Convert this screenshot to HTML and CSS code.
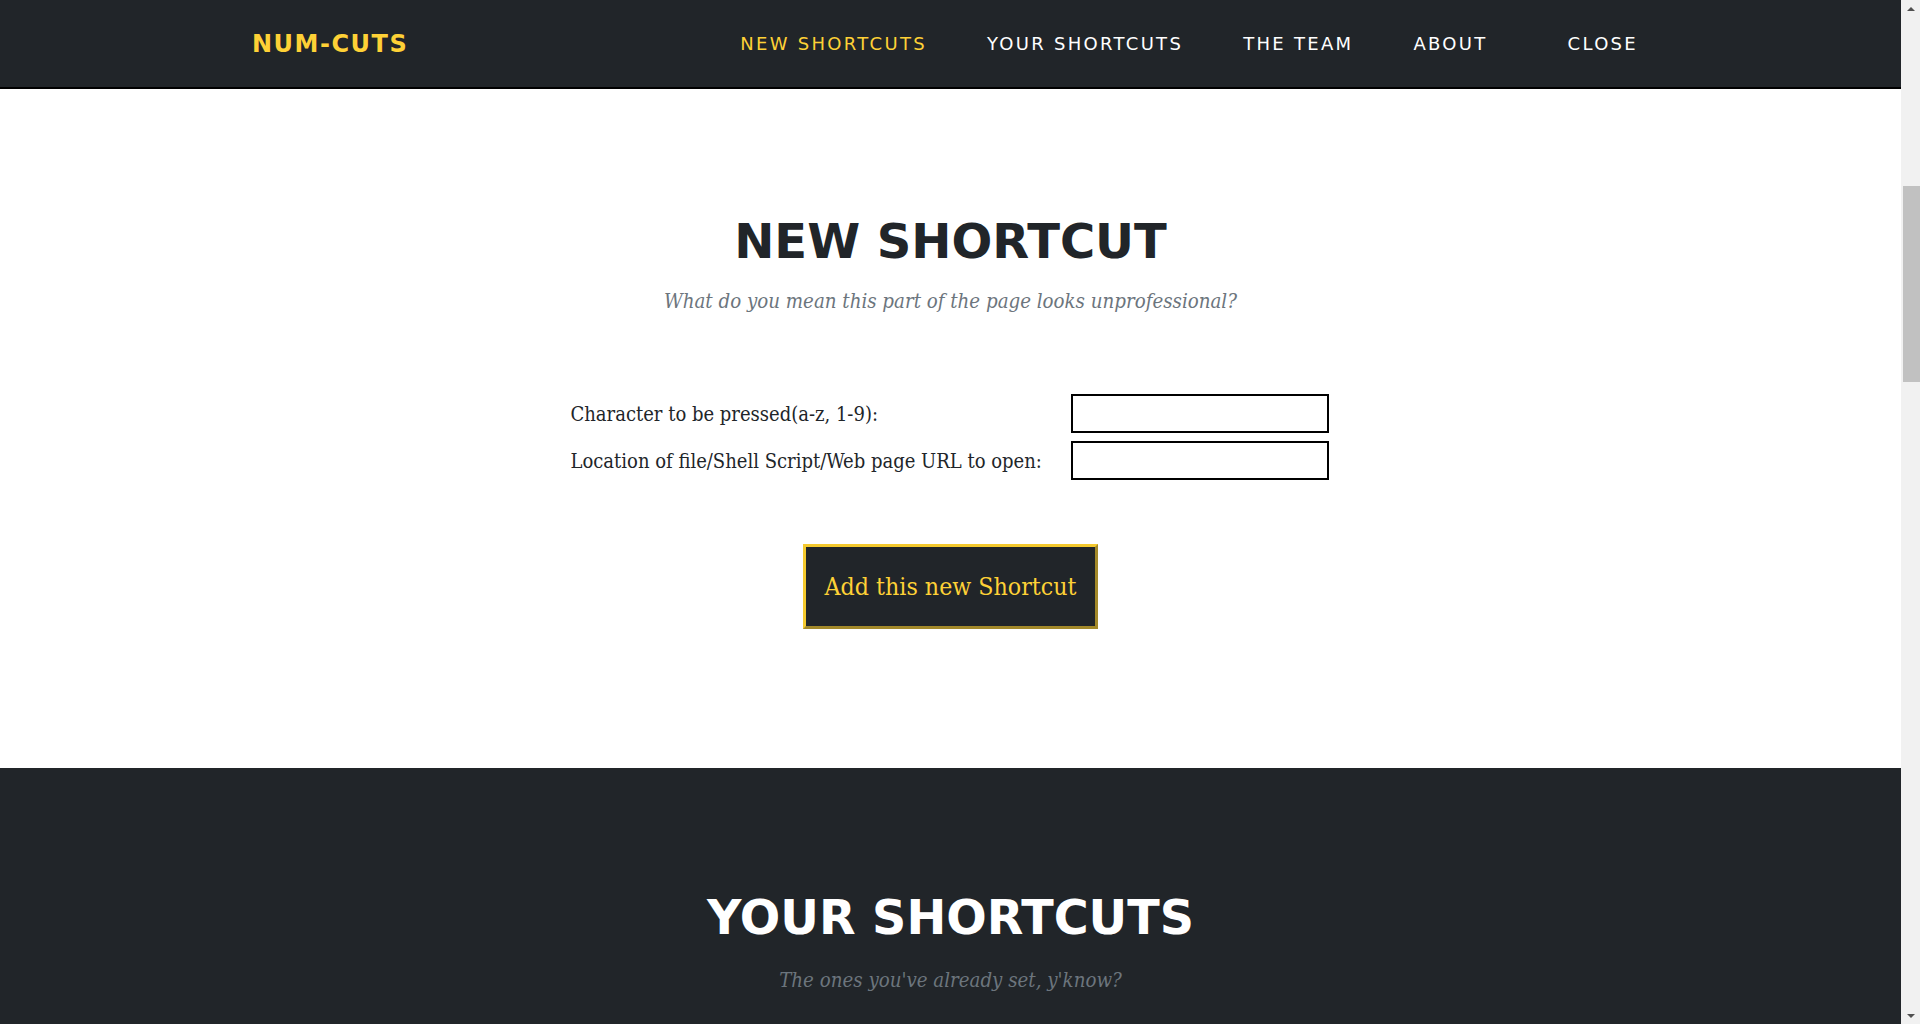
FILE: index.html
```html
<!DOCTYPE html>
<html lang="en">
<head>
<meta charset="utf-8">
<title>NUM-CUTS</title>
<link rel="stylesheet" href="styles.css">
</head>
<body>
<div class="viewport">
  <div class="page">
    <nav class="navbar">
      <a class="brand" href="#">NUM-CUTS</a>
      <ul class="nav-links">
        <li><a class="nav-link active" href="#">New Shortcuts</a></li>
        <li><a class="nav-link" href="#">Your Shortcuts</a></li>
        <li><a class="nav-link" href="#">The Team</a></li>
        <li><a class="nav-link" href="#">About</a></li>
        <li class="nav-close"><a class="nav-link" href="#">Close</a></li>
      </ul>
    </nav>

    <section class="section section-light">
      <h2 class="section-heading">New Shortcut</h2>
      <h3 class="section-subheading">What do you mean this part of the page looks unprofessional?</h3>
      <form class="shortcut-form">
        <div class="fields">
          <label class="field-label" for="key">Character to be pressed(a-z, 1-9):</label>
          <input class="field-input" id="key" type="text">
          <label class="field-label" for="target">Location of file/Shell Script/Web page URL to open:</label>
          <input class="field-input" id="target" type="text">
        </div>
        <button class="add-btn" type="button">Add this new Shortcut</button>
      </form>
    </section>

    <section class="section section-dark">
      <h2 class="section-heading">Your Shortcuts</h2>
      <h3 class="section-subheading">The ones you've already set, y'know?</h3>
    </section>
  </div>

  <div class="scrollbar">
    <div class="sb-btn sb-up"></div>
    <div class="sb-track"><div class="sb-thumb"></div></div>
    <div class="sb-btn sb-down"></div>
  </div>
</div>
</body>
</html>
```

FILE: styles.css
```css
html, body {
  margin: 0;
  height: 100%;
  overflow: hidden;
}

body {
  font-family: "DejaVu Serif", serif;
  color: #212529;
  background: #fff;
}

.viewport {
  display: flex;
  height: 1024px;
}

.page {
  flex: 1;
  min-width: 0;
  overflow: hidden;
  display: flex;
  flex-direction: column;
}

/* ---------- navbar ---------- */
.navbar {
  flex: none;
  height: 87px;
  background: #212529;
  border-bottom: 2px solid #000;
  display: flex;
  align-items: center;
  padding: 0 263px 0 252px;
}

.brand {
  font-family: "DejaVu Sans", sans-serif;
  font-weight: 700;
  font-size: 24px;
  letter-spacing: 1.5px;
  color: #fed136;
  text-decoration: none;
}

.nav-links {
  margin: 0 0 0 auto;
  padding: 0;
  list-style: none;
  display: flex;
  gap: 60px;
}

.nav-close {
  margin-left: 20px;
}

.nav-link {
  font-family: "DejaVu Sans", sans-serif;
  font-size: 18px;
  letter-spacing: 2.3px;
  text-transform: uppercase;
  color: #fff;
  text-decoration: none;
}

.nav-link.active {
  color: #fed136;
}

/* ---------- sections ---------- */
.section {
  text-align: center;
  box-sizing: border-box;
}

.section-light {
  flex: none;
  height: 679px;
  padding-top: 128px;
  background: #fff;
}

.section-dark {
  flex: 1;
  padding-top: 126px;
  background: #212529;
}

.section-heading {
  margin: 0;
  font-family: "DejaVu Sans", sans-serif;
  font-weight: 700;
  font-size: 48px;
  line-height: 1;
  text-transform: uppercase;
  color: #212529;
}

.section-dark .section-heading {
  color: #fff;
  font-size: 47.6px;
}

.section-subheading {
  margin: 22px 0 0;
  font-family: "DejaVu Serif", serif;
  font-stretch: condensed;
  font-style: italic;
  font-weight: 400;
  font-size: 20.3px;
  line-height: 1.45;
  color: #6c757d;
}

.section-dark .section-subheading {
  margin-top: 24px;
}

/* ---------- form ---------- */
.shortcut-form {
  margin-top: 78px;
  display: flex;
  flex-direction: column;
  align-items: center;
}

.fields {
  display: grid;
  grid-template-columns: 500px 258px;
  row-gap: 8px;
  align-items: center;
  text-align: left;
  margin-right: 2px;
}

.field-label {
  font-family: "DejaVu Serif", serif;
  font-stretch: condensed;
  font-size: 20px;
  color: #212529;
}

.field-input {
  width: 258px;
  height: 39px;
  box-sizing: border-box;
  border: 2px solid #000;
  padding: 2px 4px;
  background: #fff;
  font-size: 16px;
}

.add-btn {
  margin-top: 64px;
  width: 295px;
  height: 85px;
  box-sizing: border-box;
  border-width: 3px;
  border-style: solid;
  border-color: #f4c92e #a3892a #a3892a #f4c92e;
  background: #212529;
  color: #fed136;
  font-family: "DejaVu Serif", serif;
  font-stretch: condensed;
  font-size: 24.7px;
  padding: 0;
  cursor: pointer;
}

/* ---------- scrollbar ---------- */
.scrollbar {
  flex: none;
  width: 19px;
  background: #f1f1f1;
  display: flex;
  flex-direction: column;
}

.sb-btn {
  flex: none;
  height: 17px;
  display: flex;
  align-items: center;
  justify-content: center;
}

.sb-up::before {
  content: "";
  border-left: 4px solid transparent;
  border-right: 4px solid transparent;
  border-bottom: 4px solid #505050;
}

.sb-down::before {
  content: "";
  border-left: 4px solid transparent;
  border-right: 4px solid transparent;
  border-top: 4px solid #505050;
}

.sb-track {
  flex: 1;
  padding-top: 169px;
}

.sb-thumb {
  height: 196px;
  margin-left: 2px;
  background: #c1c1c1;
}
```
